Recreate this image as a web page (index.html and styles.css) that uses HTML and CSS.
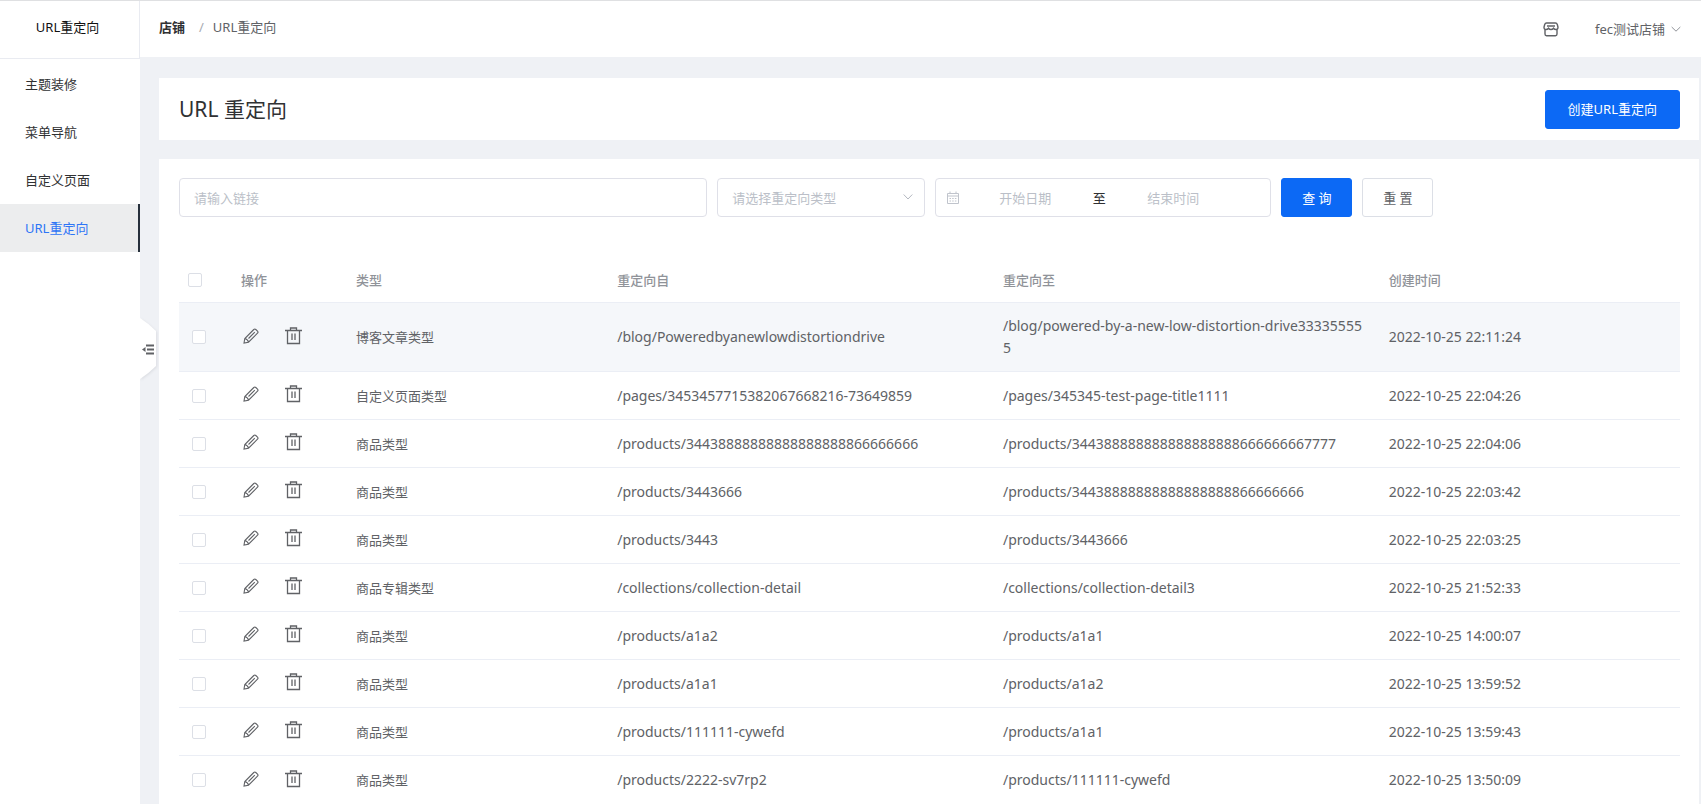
FILE: index.html
```html
<!DOCTYPE html>
<html lang="zh-CN">
<head>
<meta charset="utf-8">
<title>URL重定向</title>
<link rel="stylesheet" href="styles.css">
</head>
<body>
<svg class="sprite" aria-hidden="true">
  <symbol id="i-edit" viewBox="0 0 16 16"><path d="M1 15 1.800 10.500 10.800 1.500Q11.800.5 12.800 1.500L14.500 3.200Q15.500 4.200 14.500 5.200L5.500 14.200Z M1.800 10.500Q4.800 11.200 5.500 14.200 M5.500 10.500 11.800 4.200"/></symbol>
  <symbol id="i-trash" viewBox="0 0 17 18"><path d="M0 3.500H17 M5.500 3V1H11.500V3 M2.500 3.500V16.500H14.500V3.500 M7 6.500V13 M10 6.500V13"/></symbol>
</svg>
<div class="app">
  <aside class="sidebar">
    <div class="sidebar-title">URL重定向</div>
    <nav class="menu">
      <a class="menu-item" href="#">主题装修</a>
      <a class="menu-item" href="#">菜单导航</a>
      <a class="menu-item" href="#">自定义页面</a>
      <a class="menu-item active" href="#" aria-current="page">URL重定向</a>
    </nav>
    <button class="collapse" type="button" aria-label="收起菜单">
      <svg viewBox="0 0 20 66"><path class="tab" d="M0 1Q8 6 16 14V49Q8 57 0 62Z"/><path class="bars" d="M6 28.500H14 M7 32.500H14 M6 36.500H14"/><path class="tip" d="M2 32.500 5.500 30V35Z"/></svg>
    </button>
  </aside>
  <div class="page">
    <header class="topbar">
      <nav class="crumbs"><a class="crumb-root" href="#">店铺</a><span class="crumb-sep">/</span><span>URL重定向</span></nav>
      <div class="account">
        <button class="shop" type="button" aria-label="店铺">
          <svg viewBox="0 0 16 15"><path d="M3.500 1H12.500Q13.800 1 14.300 2.500L15 5.200Q15 7.500 13 7.500Q11.500 7.500 10.500 6.200Q9.500 7.500 8 7.500Q6.500 7.500 5.500 6.200Q4.500 7.500 3 7.500Q1 7.500 1 5.200L1.700 2.500Q2.200 1 3.500 1Z M4 4H12 M2 7.500V12Q2 13.700 3.500 13.700H12.500Q14 13.700 14 12V7.500"/></svg>
        </button>
        <button class="user" type="button"><span>fec测试店铺</span><svg viewBox="0 0 10 10"><path d="M.7 3 5 7.200 9.300 3"/></svg></button>
      </div>
    </header>
    <main class="content">
      <section class="card heading">
        <h1>URL 重定向</h1>
        <button class="btn primary" type="button">创建URL重定向</button>
      </section>
      <section class="card list">
        <form class="filters">
          <input class="field link" type="text" placeholder="请输入链接" aria-label="链接">
          <div class="picker">
            <select class="field" aria-label="重定向类型"><option>请选择重定向类型</option></select>
            <svg viewBox="0 0 10 10"><path d="M.7 2.500 5 7 9.300 2.500"/></svg>
          </div>
          <div class="field range">
            <svg viewBox="0 0 14 14"><path d="M1.500 2.500H12.500V12.500H1.500Z M1.500 5H12.500 M4 .5V3 M10 .5V3"/><path d="M3.500 7.500H10.500 M3.500 10H10.500" stroke-dasharray="1.500 1.200"/></svg>
            <input type="text" placeholder="开始日期" aria-label="开始日期">
            <span>至</span>
            <input type="text" placeholder="结束时间" aria-label="结束时间">
          </div>
          <button class="btn primary" type="button">查 询</button>
          <button class="btn" type="button">重 置</button>
        </form>
        <table class="grid">
          <colgroup><col class="c-check"><col class="c-ops"><col class="c-type"><col class="c-url"><col class="c-url"><col></colgroup>
          <thead>
            <tr><th class="check"><input type="checkbox" aria-label="全选"></th><th>操作</th><th>类型</th><th>重定向自</th><th>重定向至</th><th>创建时间</th></tr>
          </thead>
          <tbody>
            <tr class="hover"><td class="check"><input type="checkbox" aria-label="选择"></td><td><div class="ops"><button type="button" aria-label="编辑"><svg class="edit"><use href="#i-edit"/></svg></button><button type="button" aria-label="删除"><svg class="trash"><use href="#i-trash"/></svg></button></div></td><td class="type">博客文章类型</td><td>/blog/Poweredbyanewlowdistortiondrive</td><td>/blog/powered-by-a-new-low-distortion-drive333355555</td><td>2022-10-25 22:11:24</td></tr>
            <tr><td class="check"><input type="checkbox" aria-label="选择"></td><td><div class="ops"><button type="button" aria-label="编辑"><svg class="edit"><use href="#i-edit"/></svg></button><button type="button" aria-label="删除"><svg class="trash"><use href="#i-trash"/></svg></button></div></td><td class="type">自定义页面类型</td><td>/pages/3453457715382067668216-73649859</td><td>/pages/345345-test-page-title1111</td><td>2022-10-25 22:04:26</td></tr>
            <tr><td class="check"><input type="checkbox" aria-label="选择"></td><td><div class="ops"><button type="button" aria-label="编辑"><svg class="edit"><use href="#i-edit"/></svg></button><button type="button" aria-label="删除"><svg class="trash"><use href="#i-trash"/></svg></button></div></td><td class="type">商品类型</td><td>/products/34438888888888888888866666666</td><td>/products/344388888888888888888666666667777</td><td>2022-10-25 22:04:06</td></tr>
            <tr><td class="check"><input type="checkbox" aria-label="选择"></td><td><div class="ops"><button type="button" aria-label="编辑"><svg class="edit"><use href="#i-edit"/></svg></button><button type="button" aria-label="删除"><svg class="trash"><use href="#i-trash"/></svg></button></div></td><td class="type">商品类型</td><td>/products/3443666</td><td>/products/34438888888888888888866666666</td><td>2022-10-25 22:03:42</td></tr>
            <tr><td class="check"><input type="checkbox" aria-label="选择"></td><td><div class="ops"><button type="button" aria-label="编辑"><svg class="edit"><use href="#i-edit"/></svg></button><button type="button" aria-label="删除"><svg class="trash"><use href="#i-trash"/></svg></button></div></td><td class="type">商品类型</td><td>/products/3443</td><td>/products/3443666</td><td>2022-10-25 22:03:25</td></tr>
            <tr><td class="check"><input type="checkbox" aria-label="选择"></td><td><div class="ops"><button type="button" aria-label="编辑"><svg class="edit"><use href="#i-edit"/></svg></button><button type="button" aria-label="删除"><svg class="trash"><use href="#i-trash"/></svg></button></div></td><td class="type">商品专辑类型</td><td>/collections/collection-detail</td><td>/collections/collection-detail3</td><td>2022-10-25 21:52:33</td></tr>
            <tr><td class="check"><input type="checkbox" aria-label="选择"></td><td><div class="ops"><button type="button" aria-label="编辑"><svg class="edit"><use href="#i-edit"/></svg></button><button type="button" aria-label="删除"><svg class="trash"><use href="#i-trash"/></svg></button></div></td><td class="type">商品类型</td><td>/products/a1a2</td><td>/products/a1a1</td><td>2022-10-25 14:00:07</td></tr>
            <tr><td class="check"><input type="checkbox" aria-label="选择"></td><td><div class="ops"><button type="button" aria-label="编辑"><svg class="edit"><use href="#i-edit"/></svg></button><button type="button" aria-label="删除"><svg class="trash"><use href="#i-trash"/></svg></button></div></td><td class="type">商品类型</td><td>/products/a1a1</td><td>/products/a1a2</td><td>2022-10-25 13:59:52</td></tr>
            <tr><td class="check"><input type="checkbox" aria-label="选择"></td><td><div class="ops"><button type="button" aria-label="编辑"><svg class="edit"><use href="#i-edit"/></svg></button><button type="button" aria-label="删除"><svg class="trash"><use href="#i-trash"/></svg></button></div></td><td class="type">商品类型</td><td>/products/111111-cywefd</td><td>/products/a1a1</td><td>2022-10-25 13:59:43</td></tr>
            <tr><td class="check"><input type="checkbox" aria-label="选择"></td><td><div class="ops"><button type="button" aria-label="编辑"><svg class="edit"><use href="#i-edit"/></svg></button><button type="button" aria-label="删除"><svg class="trash"><use href="#i-trash"/></svg></button></div></td><td class="type">商品类型</td><td>/products/2222-sv7rp2</td><td>/products/111111-cywefd</td><td>2022-10-25 13:50:09</td></tr>
          </tbody>
        </table>
      </section>
    </main>
  </div>
</div>
</body>
</html>
```
FILE: styles.css
```css
* { box-sizing: border-box; }

body {
  margin: 0;
  background: #eff1f5;
  color: #606266;
  font: 13px/22px "Noto Sans", "Noto Sans CJK SC", sans-serif;
}

button, input, select { font: inherit; color: inherit; margin: 0; }
button { border: 0; background: none; padding: 0; cursor: pointer; }
a { color: inherit; text-decoration: none; }
svg { display: block; fill: none; stroke: currentColor; }
.sprite { display: none; }

.app {
  display: flex;
  min-height: 100vh;
  border-top: 1px solid #dfe0e2;
}

/* Sidebar */
.sidebar {
  position: relative;
  flex: none;
  width: 140px;
  background: #fff;
  color: #303133;
}
.sidebar-title {
  height: 58px;
  padding: 0 4px 6px 0;
  display: flex;
  align-items: center;
  justify-content: center;
  border-bottom: 1px solid #e9ebf1;
  border-right: 1px solid #e9ebf1;
  color: #111;
}
.menu { padding-top: 1px; }
.menu-item {
  display: flex;
  align-items: center;
  height: 48px;
  padding-left: 25px;
}
.menu-item.active {
  background: #ecedee;
  border-right: 2px solid #27303c;
  color: #2e75f6;
}
.collapse {
  position: absolute;
  left: 100%;
  top: 316px;
  width: 20px;
  height: 66px;
  color: #606266;
}
.collapse .tab { fill: #fff; stroke: none; filter: drop-shadow(1px 1px 1px #dcdee3); }
.collapse .bars { stroke-width: 2; }
.collapse .tip { fill: currentColor; stroke: none; }

/* Top bar */
.page { flex: 1; min-width: 0; display: flex; flex-direction: column; }
.topbar {
  display: flex;
  justify-content: space-between;
  align-items: center;
  height: 56px;
  padding: 0 20px 4px 19px;
  background: #fff;
}
.crumbs { display: flex; }
.crumb-root { color: #303133; font-weight: 700; }
.crumb-sep { padding: 0 9px 0 14px; color: #a8abb2; }
.account { display: flex; align-items: center; gap: 36px; padding-top: 4px; }
.shop svg { width: 16px; height: 15px; stroke-width: 1.4; }
.user { display: flex; align-items: center; gap: 6px; }
.user svg { width: 10px; height: 10px; color: #909399; }

/* Content */
.content {
  flex: 1;
  display: flex;
  flex-direction: column;
  gap: 19px;
  padding: 21px 2px 0 19px;
}
.card { background: #fff; padding: 0 19px 0 20px; }
.heading {
  display: flex;
  align-items: center;
  justify-content: space-between;
  height: 62px;
}
h1 {
  margin: 0;
  color: #303133;
  font-size: 21px;
  font-weight: 400;
  line-height: 30px;
}
.btn {
  height: 39px;
  padding: 0 22px;
  border: 1px solid #dcdfe6;
  border-radius: 3px;
  background: #fff;
}
.btn.primary { border-color: #0c69f5; background: #0c69f5; color: #fff; }

.list { flex: 1; padding-top: 19px; }
.filters { display: flex; gap: 10px; }
.field {
  width: 100%;
  height: 39px;
  padding: 0 14px;
  border: 1px solid #dfe0e8;
  border-radius: 4px;
  background: #fff;
}
.link { flex: 0 0 35.2%; width: auto; min-width: 0; }
.picker { position: relative; width: 208px; }
.picker select { appearance: none; color: #bbbfc8; }
.picker svg {
  position: absolute;
  right: 12px;
  top: 14px;
  width: 10px;
  height: 10px;
  color: #b4b8c0;
}
.range { display: flex; align-items: center; width: 336px; padding: 0 10px; }
.range svg { flex: none; width: 14px; height: 14px; color: #c0c4cc; }
.range input {
  width: 130px;
  padding: 0;
  border: 0;
  background: none;
  text-align: center;
}
.range span { flex: none; width: 18px; color: #303133; text-align: center; }
::placeholder { color: #bbbfc8; opacity: 1; }
.filters .btn { width: 71px; padding: 0; }

/* Table */
.grid {
  width: 100%;
  margin-top: 40px;
  table-layout: fixed;
  border-collapse: separate;
  border-spacing: 0;
  font-size: 14px;
}
.c-check { width: 52px; }
.c-ops { width: 115px; }
.c-type { width: 17.4%; }
.c-url { width: 25.7%; }
th, td {
  border-bottom: 1px solid #ebeef5;
  text-align: left;
  font-weight: 400;
  word-break: break-all;
}
th { height: 46px; padding: 0 10px; color: #909399; font-size: 13px; font-weight: 500; }
td { height: 48px; padding: 0 10px; }
.hover td { height: 69px; background: #f5f7fa; }
tbody tr:last-child td { border-bottom: 0; }
td.type { font-size: 13px; }
th.check { padding: 0 9px; }
td.check { padding: 0 13px; }
.check input {
  display: block;
  appearance: none;
  width: 14px;
  height: 14px;
  border: 1px solid #dcdfe6;
  border-radius: 2px;
  background: #fff;
}
.ops { display: flex; align-items: center; gap: 26px; padding: 0 0 3px 2px; }
.edit { width: 16px; height: 16px; stroke-width: 1.1; }
.trash { width: 17px; height: 18px; stroke-width: 1.3; }
```
